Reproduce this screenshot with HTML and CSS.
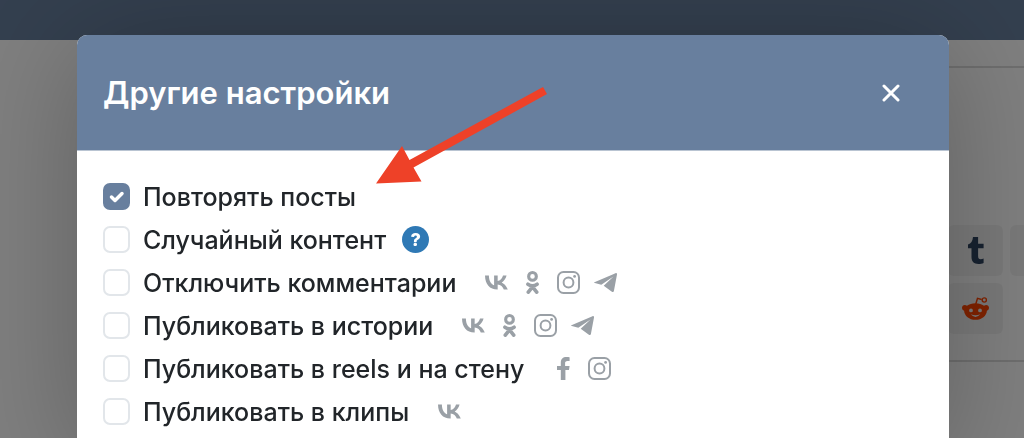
FILE: index.html
```html
<!DOCTYPE html>
<html lang="ru">
<head>
    <meta charset="UTF-8">
    <meta name="viewport" content="width=device-width, initial-scale=1.0">
    <title>Другие настройки</title>
    <link rel="stylesheet" href="styles.css">
</head>
<body>
    <!-- icons -->
    <svg class="sprite" aria-hidden="true">
        <symbol id="vk" viewBox="1.4 2.9 22.5 13.7">
            <path d="M13.5 16.6C6 16.6 1.600 11.500 1.400 2.900h3.800c.1 6.300 2.900 8.900 5.100 9.500V2.900h3.500v5.400c2.200-.2 4.500-2.700 5.200-5.400h3.500c-.6 3.300-3 5.800-4.800 6.800 1.800.8 4.600 3 6 6.900h-3.900c-.8-2.600-3.100-4.600-6-4.900v4.900z"/>
        </symbol>
        <symbol id="ok" viewBox="0 0 13 23">
            <path fill-rule="evenodd" d="M6.500 0a5.400 5.400 0 1 1 0 10.800a5.400 5.400 0 0 1 0-10.800zM6.500 3.100a2.300 2.300 0 1 0 0 4.600a2.300 2.300 0 0 0 0-4.600z"/>
            <path fill="none" stroke="currentColor" stroke-width="3.600" stroke-linecap="round" stroke-linejoin="round" d="M1.900 13.200q4.600 3.100 9.200 0M6.500 15.800L2.300 21.200M6.500 15.800l4.200 5.400"/>
        </symbol>
        <symbol id="instagram" viewBox="0 0 23 23">
            <rect x="1" y="1" width="21" height="21" rx="5.500" fill="none" stroke="currentColor" stroke-width="2"/>
            <circle cx="11.500" cy="11.500" r="4.900" fill="none" stroke="currentColor" stroke-width="2"/>
            <circle cx="17.600" cy="5.400" r="1.400"/>
        </symbol>
        <symbol id="telegram" viewBox="0 0 23 19">
            <path d="M1 8.900L21.500.200c1-.4 1.700.2 1.500 1.400l-3.100 16.300c-.2 1.100-1 1.400-2 .8l-8.200-6 9.800-9.200L7.300 11.700.900 9.900c-1.200-.3-1.100-.6.100-1z"/>
        </symbol>
        <symbol id="facebook" viewBox="0 0 13 23">
            <path d="M3.800 23V12.900H0V8.900h3.800V5.800C3.800 2 6 0 9.300 0c1.500 0 2.900.2 3.300.3v3.600h-2.100c-1.900 0-2.400 1-2.400 2.200v2.800h4.500l-.6 4H8.400V23z"/>
        </symbol>
        <symbol id="tumblr" viewBox="0 0 16 27">
            <path d="M5 0h5.100v6.700h5.500v4.600h-5.500v7.500c0 2.600.8 3.400 2.600 3.400 1 0 1.900-.2 2.900-.7v4.400c-1.300.7-3.200 1.100-5.200 1.100-4.400 0-6.900-2.300-6.900-6.900v-8.800H0V7.500C3.100 6.500 4.600 4 5 0z"/>
        </symbol>
        <symbol id="reddit" viewBox="0 0 27 23">
            <path fill="none" stroke="currentColor" stroke-width="1.500" d="M13.800 7l1.700-5.700 4.200 1.200"/>
            <circle cx="22.300" cy="3" r="2.100" fill="none" stroke="currentColor" stroke-width="1.400"/>
            <path fill-rule="evenodd" d="M5 8.700C7.200 7.200 10 6.300 13.500 6.300s6.300.9 8.500 2.400c2.300-1.700 5-.4 5 2 0 1.500-.9 2.500-2.100 3C24.600 18.900 19.700 22.800 13.500 22.800S2.400 18.900 2.100 13.700C.9 13.200 0 12.200 0 10.700c0-2.400 2.700-3.700 5-2zM9 11.500a1.900 1.900 0 1 0 0 3.800a1.900 1.900 0 0 0 0-3.800zM18 11.500a1.900 1.900 0 1 0 0 3.800a1.900 1.900 0 0 0 0-3.800zM8.700 17.300q4.800 5.400 9.600 0q-4.800 2-9.600 0z"/>
        </symbol>
    </svg>

    <header class="topbar"></header>
    <main class="page">
        <section class="panel">
            <div class="networks">
                <button type="button" class="network tumblr" aria-label="Tumblr"><svg width="16" height="27"><use href="#tumblr"/></svg></button>
                <button type="button" class="network" aria-label="Добавить"></button>
                <button type="button" class="network reddit" aria-label="Reddit"><svg width="27" height="23"><use href="#reddit"/></svg></button>
            </div>
        </section>
    </main>

    <div class="overlay">
        <div class="modal" role="dialog" aria-labelledby="modal-title">
            <div class="modal-header">
                <h1 id="modal-title">Другие настройки</h1>
                <button type="button" class="close" aria-label="Закрыть">
                    <svg width="18" height="18" viewBox="0 0 18 18"><path d="M2 2l14 14M16 2L2 16"/></svg>
                </button>
            </div>
            <div class="modal-body">
                <div class="option">
                    <input type="checkbox" id="repeat" checked>
                    <label for="repeat">Повторять посты</label>
                </div>
                <div class="option">
                    <input type="checkbox" id="random">
                    <label for="random">Случайный контент</label>
                    <button type="button" class="help">?</button>
                </div>
                <div class="option">
                    <input type="checkbox" id="comments">
                    <label for="comments">Отключить комментарии</label>
                    <span class="icons">
                        <svg width="23" height="15"><use href="#vk"/></svg>
                        <svg width="21" height="23"><use href="#ok"/></svg>
                        <svg width="23" height="23"><use href="#instagram"/></svg>
                        <svg width="23" height="19"><use href="#telegram"/></svg>
                    </span>
                </div>
                <div class="option">
                    <input type="checkbox" id="stories">
                    <label for="stories">Публиковать в истории</label>
                    <span class="icons">
                        <svg width="23" height="15"><use href="#vk"/></svg>
                        <svg width="21" height="23"><use href="#ok"/></svg>
                        <svg width="23" height="23"><use href="#instagram"/></svg>
                        <svg width="23" height="19"><use href="#telegram"/></svg>
                    </span>
                </div>
                <div class="option">
                    <input type="checkbox" id="reels">
                    <label for="reels">Публиковать в reels и на стену</label>
                    <span class="icons">
                        <svg width="21" height="23"><use href="#facebook"/></svg>
                        <svg width="23" height="23"><use href="#instagram"/></svg>
                    </span>
                </div>
                <div class="option">
                    <input type="checkbox" id="clips">
                    <label for="clips">Публиковать в клипы</label>
                    <span class="icons">
                        <svg width="23" height="15"><use href="#vk"/></svg>
                    </span>
                </div>
            </div>
            <svg class="arrow" width="172" height="98" viewBox="0 0 172 98" aria-hidden="true">
                <path d="M0 97.500L26 60l7.500 14L167 1l4 7L37.500 81.500l8 14z"/>
            </svg>
        </div>
    </div>
</body>
</html>
```

FILE: styles.css
```css
* {
    box-sizing: border-box;
}

body {
    margin: 0;
    height: 100vh;
    overflow: hidden;
    background-color: #fff;
    color: #212529;
    font-family: Inter, "Liberation Sans", sans-serif;
}

button {
    padding: 0;
    border: none;
    font-family: inherit;
}

.sprite {
    display: none;
}

svg {
    fill: currentColor;
}

/* page under the modal */
.topbar {
    height: 40px;
    background-color: #687f9e;
}

.page {
    padding: 26px 0 0 77px;
}

.panel {
    padding: 157px 0 26px;
    border: 2px solid #dcdcdc;
    border-width: 2px 0;
}

.networks {
    display: grid;
    grid-template-columns: 55px 55px;
    gap: 7px;
    width: 76px;
    margin-left: auto;
}

.network {
    display: flex;
    align-items: center;
    justify-content: center;
    height: 51px;
    border-radius: 6px;
    background-color: #f3f3f3;
}

.tumblr {
    color: #2f4460;
}

.reddit {
    color: #ff4500;
}

/* modal */
.overlay {
    position: fixed;
    inset: 0;
    padding: 35px 75px 0 77px;
    background-color: rgba(0, 0, 0, 0.5);
}

.modal {
    position: relative;
    min-height: 100%;
    border-radius: 10px 10px 0 0;
    background-color: #fff;
    box-shadow: 0 10px 120px rgba(0, 0, 0, 0.25);
}

.modal-header {
    display: flex;
    align-items: center;
    justify-content: space-between;
    height: 116px;
    padding: 0 26px;
    border-bottom: 1px solid #b9c4d2;
    border-radius: 10px 10px 0 0;
    background-color: #687f9e;
    color: #fff;
}

.modal-header h1 {
    margin: 0;
    font-size: 31px;
    font-weight: 600;
}

.close {
    display: flex;
    align-items: center;
    justify-content: center;
    width: 64px;
    height: 64px;
    background: none;
    color: #fff;
    cursor: pointer;
}

.close path {
    stroke: currentColor;
    stroke-width: 3;
    stroke-linecap: round;
}

.modal-body {
    padding: 24px 26px;
}

.option {
    display: flex;
    align-items: center;
    height: 43px;
    font-size: 25px;
    font-weight: 450;
}

.option input {
    appearance: none;
    width: 27px;
    height: 27px;
    margin: 0 13px 0 0;
    border: 2px solid #e2e6ea;
    border-radius: 7px;
    background-color: #fff;
}

.option input:checked {
    border-color: #687f9e;
    background: #687f9e url("data:image/svg+xml,%3Csvg xmlns='http://www.w3.org/2000/svg' viewBox='0 0 23 23'%3E%3Cpath d='M6.500 12l3.500 3.500 7-7' fill='none' stroke='white' stroke-width='3.500' stroke-linecap='round' stroke-linejoin='round'/%3E%3C/svg%3E") center no-repeat;
}

.help {
    width: 27px;
    height: 27px;
    margin-left: 16px;
    border-radius: 50%;
    background-color: #2f79b5;
    color: #fff;
    font-size: 18px;
    font-weight: 800;
    line-height: 27px;
}

.icons {
    display: flex;
    align-items: center;
    gap: 14px;
    margin-left: 29px;
    color: #9aa0a6;
}

/* pointer lies over the header and the list */
.arrow {
    position: absolute;
    top: 51px;
    left: 299px;
    color: #ee4128;
}
```
